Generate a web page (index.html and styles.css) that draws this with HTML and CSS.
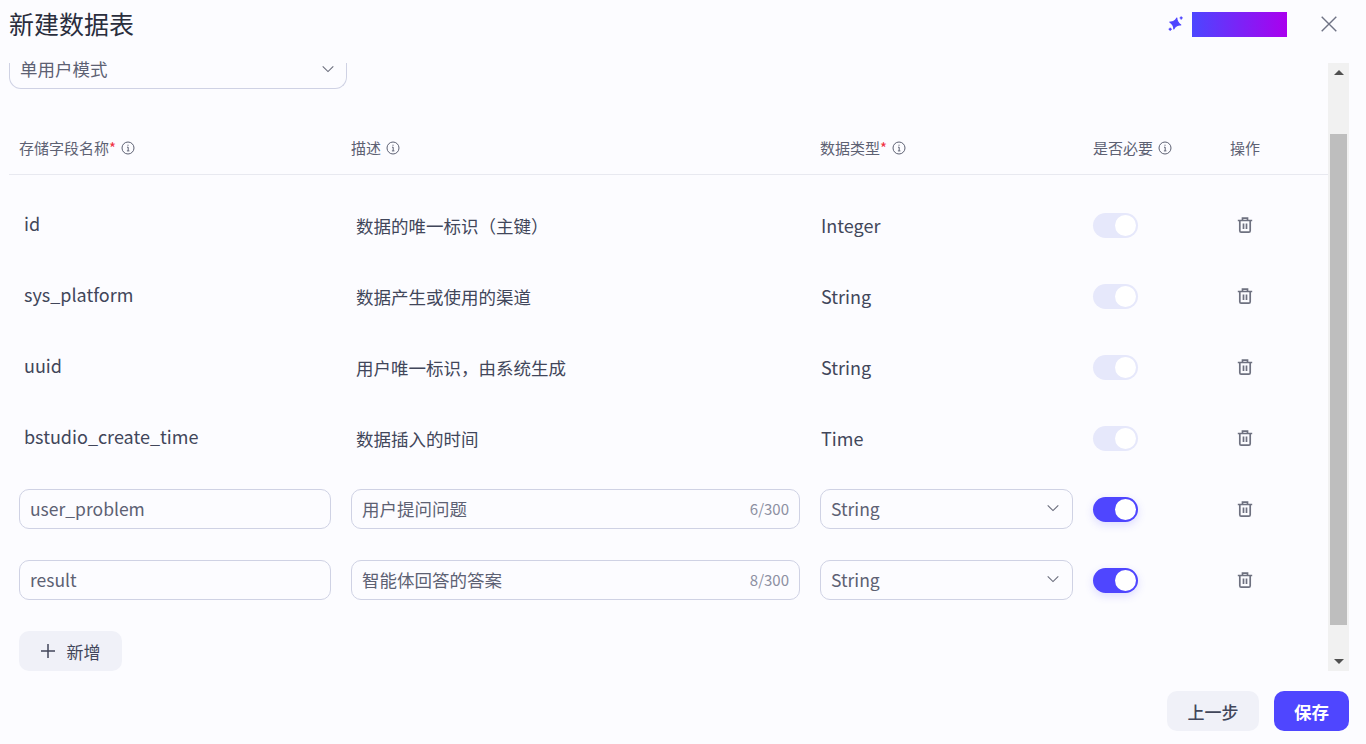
FILE: index.html
```html
<!DOCTYPE html>
<html lang="zh">
<head>
<meta charset="utf-8">
<title>新建数据表</title>
<link rel="stylesheet" href="styles.css">
</head>
<body>
<svg class="defs" width="0" height="0" aria-hidden="true">
  <symbol id="info" viewBox="0 0 14 14"><circle cx="7" cy="7" r="6" fill="none" stroke="currentColor" stroke-width="1"/><path d="M6 6.200h1.200v3.600M5.900 9.900h2.500M7 3.700v1.100" fill="none" stroke="currentColor" stroke-width="1"/></symbol>
  <symbol id="chev" viewBox="0 0 12 12"><path d="M.7 3.400 6 8.600l5.300-5.200" fill="none" stroke="currentColor" stroke-width="1.100"/></symbol>
  <symbol id="trash" viewBox="0 0 16 16"><path d="M.8 3.500h14.400M5.500 3.200V1.200h5v2M2.800 3.500v10.200c0 .7.500 1.400 1.300 1.400h7.800c.8 0 1.300-.7 1.300-1.400V3.500M6.500 6.500v5.500M9.500 6.500v5.500" fill="none" stroke="currentColor" stroke-width="1.700"/></symbol>
</svg>
<div class="dialog">
  <header class="head">
    <h1 class="title">新建数据表</h1>
    <div class="head-right">
      <svg class="spark" width="16" height="16" viewBox="0 0 16 16"><path d="M8.800 2Q8.900 6.200 12.800 9 8.200 8.500 5.800 13 6 8.800 1.800 6 6.500 6.500 8.800 2Z" fill="#4f46ff" stroke="#4f46ff" stroke-width="1.100" stroke-linejoin="round"/><path d="M13.200.4v3M11.700 1.900h3M2.200 11.800v3M.7 13.300h3" stroke="#4f46ff" stroke-width="1.400"/></svg>
      <div class="mask"></div>
      <button class="close" aria-label="关闭"><svg width="16" height="16" viewBox="0 0 16 16"><path d="M.7.700l14.600 14.600M15.300.700.700 15.300" fill="none" stroke="#6f7385" stroke-width="1.400"/></svg></button>
    </div>
  </header>
  <div class="body">
    <div class="scroll">
      <div class="content">
        <div class="mode"><span>单用户模式</span><svg class="chev" width="12" height="12"><use href="#chev"/></svg></div>
        <div class="row table-head">
          <div class="th">存储字段名称<i>*</i><svg width="14" height="14"><use href="#info"/></svg></div>
          <div class="th">描述<svg width="14" height="14"><use href="#info"/></svg></div>
          <div class="th">数据类型<i>*</i><svg width="14" height="14"><use href="#info"/></svg></div>
          <div class="th">是否必要<svg width="14" height="14"><use href="#info"/></svg></div>
          <div class="th">操作</div>
        </div>
        <div class="rows">
          <div class="row item">
            <div class="name">id</div><div class="desc">数据的唯一标识（主键）</div><div class="type">Integer</div>
            <div class="sw off"><b></b></div><svg class="del" width="16" height="16"><use href="#trash"/></svg>
          </div>
          <div class="row item">
            <div class="name">sys_platform</div><div class="desc">数据产生或使用的渠道</div><div class="type">String</div>
            <div class="sw off"><b></b></div><svg class="del" width="16" height="16"><use href="#trash"/></svg>
          </div>
          <div class="row item">
            <div class="name">uuid</div><div class="desc">用户唯一标识，由系统生成</div><div class="type">String</div>
            <div class="sw off"><b></b></div><svg class="del" width="16" height="16"><use href="#trash"/></svg>
          </div>
          <div class="row item">
            <div class="name">bstudio_create_time</div><div class="desc">数据插入的时间</div><div class="type">Time</div>
            <div class="sw off"><b></b></div><svg class="del" width="16" height="16"><use href="#trash"/></svg>
          </div>
          <div class="row item">
            <div class="box">user_problem</div>
            <div class="box spread"><span>用户提问问题</span><small>6/300</small></div>
            <div class="box spread"><span>String</span><svg class="chev" width="12" height="12"><use href="#chev"/></svg></div>
            <div class="sw on"><b></b></div><svg class="del" width="16" height="16"><use href="#trash"/></svg>
          </div>
          <div class="row item">
            <div class="box">result</div>
            <div class="box spread"><span>智能体回答的答案</span><small>8/300</small></div>
            <div class="box spread"><span>String</span><svg class="chev" width="12" height="12"><use href="#chev"/></svg></div>
            <div class="sw on"><b></b></div><svg class="del" width="16" height="16"><use href="#trash"/></svg>
          </div>
        </div>
        <button class="add"><svg width="14" height="14" viewBox="0 0 14 14"><path d="M7 0v14M0 7h14" stroke="#41465a" stroke-width="1.500"/></svg>新增</button>
      </div>
    </div>
    <div class="bar">
      <span class="arrow up"></span>
      <div class="track"><div class="thumb"></div></div>
      <span class="arrow down"></span>
    </div>
  </div>
  <footer class="foot">
    <button class="btn prev">上一步</button>
    <button class="btn save">保存</button>
  </footer>
</div>
</body>
</html>
```
FILE: styles.css
```css
* { box-sizing: border-box; }
html, body { margin: 0; height: 100%; }
body {
  background: #fcfcff;
  color: #41465a;
  font-family: "Noto Sans CJK SC", "Noto Sans", sans-serif;
  overflow: hidden;
}
.defs { display: block; height: 0; }
.dialog { height: 744px; display: flex; flex-direction: column; padding: 0 17px 13px 9px; }
.head { height: 63px; flex: none; display: flex; justify-content: space-between; padding-bottom: 15px; align-items: center; }
.title { margin: 0 0 2px; font-size: 25px; line-height: 46px; font-weight: 400; color: #2a2e3d; }
.head-right { display: flex; align-items: center; }
.spark { margin-right: 8px; }
.mask { width: 95px; height: 25px; background: linear-gradient(90deg, #4c46ff, #aa00ee); }
.close { border: 0; background: none; padding: 0; margin: 0 12px 0 34px; width: 16px; height: 16px; display: flex; }
.body { flex: none; height: 608px; display: flex; }
.scroll { flex: 1; min-width: 0; }
.mode {
  width: 338px; height: 26px; border: 1px solid #cfd2e4; border-top: 0; border-radius: 0 0 12px 12px;
  padding: 0 9px 0 10px; font-size: 17.500px; line-height: 12px;
  display: flex; justify-content: space-between; align-items: flex-start; color: #5d6173;
}
.row { display: grid; grid-template-columns: 312px 449px 253px 117px auto; column-gap: 20px; padding-left: 10px; align-items: center; }
.row > * { min-width: 0; }
.table-head { margin-top: 29px; height: 57px; border-bottom: 1px solid #e8e9f0; padding-top: 3px; font-size: 15px; color: #5d6173; }
.th { display: flex; align-items: center; line-height: 20px; }
.th i { color: #f0303f; font-style: normal; }
.th svg { margin-left: 5px; color: #5d6173; }
.rows { padding-top: 30px; display: flex; flex-direction: column; gap: 31px; }
.item { height: 40px; font-size: 18px; }
.name { padding: 0 0 4px 5px; color: #41465a; line-height: 28px; }
.desc { padding-left: 5px; font-size: 17.500px; }
.type { padding: 0 0 1px 1px; }
.box {
  height: 40px; border: 1px solid #cfd2e4; border-radius: 10px; padding: 0 10px 2px;
  display: flex; align-items: center; font-size: 17.500px; color: #5d6173;
}
.spread { justify-content: space-between; }
.box small { font-size: 15px; color: #8d90a2; }
.chev { color: #6a6d7c; flex: none; margin-right: 3px; }
.sw { width: 45px; height: 25px; border-radius: 13px; padding: 2px; display: flex; justify-content: flex-end; }
.sw b { width: 21px; height: 21px; border-radius: 50%; background: #fff; }
.sw.off { background: #e6e8fb; }
.sw.on { background: #4f46ff; box-shadow: 0 3px 8px rgba(79, 70, 255, .18); }
.del { color: #6e7180; margin-left: 7px; }
.add {
  margin: 31px 0 0 10px; width: 103px; height: 40px; border: 0; border-radius: 10px;
  background: #f0f1f8; color: #41465a; font: 400 17px "Noto Sans CJK SC", sans-serif;
  display: flex; align-items: center; justify-content: center; gap: 12px;
}
.bar { width: 21px; flex: none; background: #f1f1f1; display: flex; flex-direction: column; align-items: center; }
.arrow { width: 0; height: 0; border-left: 5px solid transparent; border-right: 5px solid transparent; flex: none; }
.arrow.up { border-bottom: 5px solid #505050; margin-top: 7px; }
.arrow.down { border-top: 5px solid #505050; margin-bottom: 7px; }
.track { flex: 1; align-self: stretch; padding: 59px 2px 34px; }
.thumb { height: 100%; background: #bebebe; }
.foot { flex: 1; display: flex; justify-content: flex-end; align-items: flex-end; gap: 15px; }
.btn { width: 92px; height: 40px; border: 0; border-radius: 10px; font: 500 17px "Noto Sans CJK SC", sans-serif; }
.prev { background: #f0f1f8; color: #41465a; }
.save { width: 75px; background: #4f46ff; color: #fff; font-weight: 700; font-size: 17.500px; }
```
